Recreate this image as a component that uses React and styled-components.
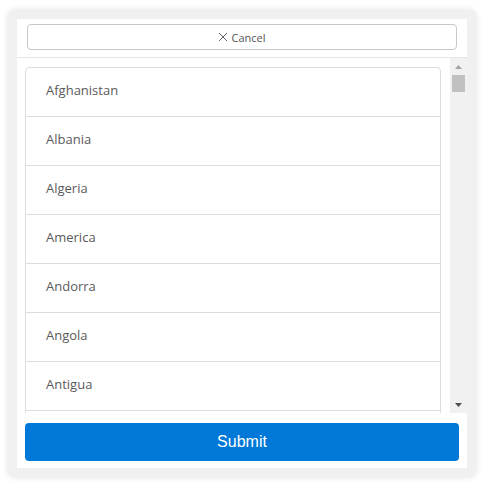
import { useState } from "react";
import styled, { createGlobalStyle } from "styled-components";

const countries = [
  "Afghanistan", "Albania", "Algeria", "America", "Andorra", "Angola", "Antigua",
  "Argentina", "Armenia", "Australia", "Austria", "Azerbaijan", "Bahamas", "Bahrain",
  "Bangladesh", "Barbados", "Belarus", "Belgium", "Belize", "Benin", "Bhutan",
  "Bolivia", "Bosnia", "Botswana", "Brazil", "Brunei", "Bulgaria", "Burkina Faso",
  "Burundi", "Cambodia", "Cameroon", "Canada", "Cape Verde", "Chad", "Chile", "China",
  "Colombia", "Comoros", "Congo", "Costa Rica", "Croatia", "Cuba", "Cyprus", "Czechia",
  "Denmark", "Djibouti", "Dominica", "Ecuador", "Egypt", "El Salvador", "Eritrea",
  "Estonia", "Ethiopia", "Fiji", "Finland", "France", "Gabon", "Gambia", "Georgia",
  "Germany", "Ghana", "Greece", "Grenada", "Guatemala", "Guinea", "Guyana", "Haiti",
  "Honduras", "Hungary", "Iceland", "India", "Indonesia", "Iran", "Iraq", "Ireland",
  "Israel", "Italy", "Jamaica", "Japan", "Jordan", "Kazakhstan", "Kenya", "Kiribati",
  "Kuwait", "Laos", "Latvia", "Lebanon", "Lesotho", "Liberia", "Libya", "Lithuania",
  "Luxembourg", "Madagascar", "Malawi", "Malaysia", "Maldives", "Mali", "Malta",
  "Mexico", "Moldova", "Monaco", "Mongolia", "Morocco", "Nepal", "Netherlands",
  "New Zealand", "Niger", "Nigeria", "Norway", "Oman", "Pakistan", "Panama", "Peru",
  "Philippines", "Poland", "Portugal", "Qatar", "Romania", "Russia", "Rwanda", "Samoa",
  "Senegal", "Serbia", "Singapore", "Slovakia", "Somalia", "Spain", "Sudan", "Sweden",
  "Switzerland", "Syria", "Thailand", "Togo", "Tunisia", "Turkey", "Uganda", "Ukraine",
  "Uruguay", "Vietnam", "Yemen", "Zambia", "Zimbabwe",
];

const THUMB = 17;

const GlobalStyle = createGlobalStyle`
  html, body {
    margin: 0;
    background: #ffffff;
  }
  body {
    padding: 10px 8px 8px;
    font-family: "Open Sans", "Noto Sans", sans-serif;
  }
`;

const Frame = styled.div`
  background: #f0f0f0;
  border-radius: 6px;
  padding: 9px;
  box-shadow: 0 0 6px rgba(0, 0, 0, 0.12);
`;

const Sheet = styled.div`
  background: #ffffff;
  display: flex;
  flex-direction: column;
  height: 449px;
`;

const Header = styled.div`
  padding: 5px 10px 7px;
  border-bottom: 1px solid #e6e6e6;
`;

const CancelButton = styled.button`
  width: 100%;
  height: 26px;
  display: flex;
  align-items: center;
  justify-content: center;
  gap: 3px;
  background: #ffffff;
  border: 1px solid #c8c8c8;
  border-radius: 4px;
  color: #555555;
  font-family: "Open Sans", "Noto Sans", sans-serif;
  font-size: 11px;
  cursor: pointer;

  svg {
    width: 10px;
    height: 10px;
  }
`;

const Body = styled.div`
  flex: 1;
  min-height: 0;
  display: flex;
`;

const Scroller = styled.div`
  flex: 1;
  min-width: 0;
  overflow-y: auto;
  scrollbar-width: none;
  padding: 9px 9px 0 8px;

  &::-webkit-scrollbar {
    display: none;
  }
`;

const Rail = styled.div`
  width: 17px;
  background: #f1f1f1;
  display: flex;
  flex-direction: column;
`;

const Arrow = styled.div`
  height: 17px;
  display: flex;
  align-items: center;
  justify-content: center;

  svg {
    width: 7px;
    height: 4px;
  }
`;

const Track = styled.div`
  flex: 1;
  position: relative;
`;

const Thumb = styled.div`
  position: absolute;
  left: 2px;
  right: 2px;
  height: ${THUMB}px;
  background: #c1c1c1;
`;

const List = styled.ul`
  list-style: none;
  margin: 0;
  padding: 0;
  border: 1px solid #dcdcdc;
  border-radius: 4px 4px 0 0;
`;

const Item = styled.li`
  height: 48px;
  box-sizing: border-box;
  display: flex;
  align-items: center;
  padding: 0 0 4px 20px;
  color: #5a5a5a;
  font-size: 13px;
  border-top: 1px solid #dcdcdc;

  &:first-child {
    border-top: 0;
    height: 48px;
  }
  & + & {
    height: 49px;
  }
`;

const Footer = styled.div`
  padding: 10px 8px 7px;
`;

const SubmitButton = styled.button`
  width: 100%;
  height: 38px;
  background: #0078d7;
  color: #ffffff;
  border: 0;
  border-radius: 4px;
  font-family: "Liberation Sans", Arial, sans-serif;
  font-size: 16px;
  cursor: pointer;
`;

const CloseIcon = () => (
  <svg viewBox="0 0 10 10" fill="none" stroke="#666" strokeWidth="1">
    <path d="M1 1 L9 9 M9 1 L1 9" />
  </svg>
);

const Triangle = ({ up, color }) => (
  <svg viewBox="0 0 7 4">
    <path d={up ? "M0 4 L3.5 0 L7 4 Z" : "M0 0 L7 0 L3.5 4 Z"} fill={color} />
  </svg>
);

export default function App() {
  const [pos, setPos] = useState(0);
  const [trackH, setTrackH] = useState(321);

  const onScroll = (e) => {
    const el = e.currentTarget;
    const max = el.scrollHeight - el.clientHeight;
    setPos(max > 0 ? el.scrollTop / max : 0);
  };

  return (
    <>
      <GlobalStyle />
      <Frame>
        <Sheet>
          <Header>
            <CancelButton>
              <CloseIcon />
              Cancel
            </CancelButton>
          </Header>
          <Body>
            <Scroller onScroll={onScroll}>
              <List>
                {countries.map((c) => (
                  <Item key={c}>{c}</Item>
                ))}
              </List>
            </Scroller>
            <Rail>
              <Arrow>
                <Triangle up color={pos > 0 ? "#505050" : "#a3a3a3"} />
              </Arrow>
              <Track ref={(el) => el && el.clientHeight !== trackH && setTrackH(el.clientHeight)}>
                <Thumb style={{ top: pos * (trackH - THUMB) }} />
              </Track>
              <Arrow>
                <Triangle color={pos < 1 ? "#505050" : "#a3a3a3"} />
              </Arrow>
            </Rail>
          </Body>
          <Footer>
            <SubmitButton>Submit</SubmitButton>
          </Footer>
        </Sheet>
      </Frame>
    </>
  );
}
